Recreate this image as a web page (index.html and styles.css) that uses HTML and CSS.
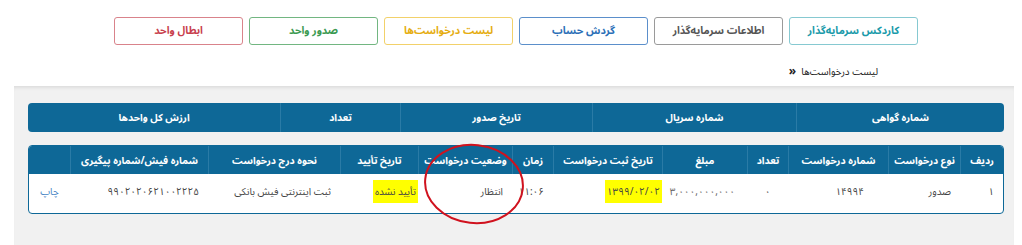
FILE: index.html
```html
<!DOCTYPE html>
<html lang="fa" dir="rtl">
<head>
  <meta charset="UTF-8">
  <title>لیست درخواست‌ها</title>
  <link rel="stylesheet" href="styles.css">
</head>
<body>

<div class="toolbar">
  <button class="btn btn-teal">کاردکس سرمایه‌گذار</button>
  <button class="btn btn-gray">اطلاعات سرمایه‌گذار</button>
  <button class="btn btn-blue">گردش حساب</button>
  <button class="btn btn-yellow">لیست درخواست‌ها</button>
  <button class="btn btn-green">صدور واحد</button>
  <button class="btn btn-red">ابطال واحد</button>
</div>

<div class="breadcrumb">
  <span>لیست درخواست‌ها</span>
  <span class="sep" dir="ltr">»</span>
</div>

<div class="panel">
  <!-- خلاصه گواهی -->
  <div class="summary">
    <div>شماره گواهی</div>
    <div>شماره سریال</div>
    <div>تاریخ صدور</div>
    <div>تعداد</div>
    <div>ارزش کل واحدها</div>
  </div>

  <!-- جدول درخواست‌ها -->
  <div class="requests-wrap">
    <div class="requests">
      <div class="row head">
        <div>ردیف</div>
        <div>نوع درخواست</div>
        <div>شماره درخواست</div>
        <div>تعداد</div>
        <div>مبلغ</div>
        <div>تاریخ ثبت درخواست</div>
        <div>زمان</div>
        <div>وضعیت درخواست</div>
        <div>تاریخ تأیید</div>
        <div>نحوه درج درخواست</div>
        <div>شماره فیش/شماره پیگیری</div>
        <div></div>
      </div>
      <div class="row body">
        <div>۱</div>
        <div>صدور</div>
        <div class="num">۱۴۹۹۴</div>
        <div class="center">۰</div>
        <div class="amount">۳,۰۰۰,۰۰۰,۰۰۰</div>
        <div class="flush"><span class="mark">۱۳۹۹/۰۲/۰۲</span></div>
        <div>۱۱:۰۶</div>
        <div>انتظار</div>
        <div class="flush"><span class="mark">تأیید نشده</span></div>
        <div>ثبت اینترنتی فیش بانکی</div>
        <div>۹۹۰۲۰۲۰۶۲۱۰۰۲۲۲۵</div>
        <div class="center"><a class="print" href="#">چاپ</a></div>
      </div>
    </div>

    <svg class="annot" width="110" height="90" viewBox="0 0 110 90">
      <ellipse cx="55" cy="45" rx="49" ry="39" transform="rotate(6 55 45)" fill="none" stroke="#d0121e" stroke-width="2"/>
    </svg>
  </div>
</div>

</body>
</html>
```

FILE: styles.css
```css
body {
  margin: 0;
  font-family: "Noto Sans Arabic", "DejaVu Sans", sans-serif;
  background-color: #ffffff;
  color: #333333;
  direction: rtl;
}

.toolbar {
  display: flex;
  justify-content: center;
  gap: 6px;
  padding: 17px 0 0 10px;
}

.btn {
  width: 129px;
  height: 28px;
  background-color: #ffffff;
  border: 1px solid;
  border-radius: 3px;
  font-family: inherit;
  font-size: 10.5px;
  font-weight: bold;
  cursor: pointer;
}

.btn-teal { color: #1a9aaa; border-color: #86c9d1; }
.btn-gray { color: #555555; border-color: #9a9a9a; }
.btn-blue { color: #2c6fb7; border-color: #5b8fcb; }
.btn-yellow { color: #e5ad10; border-color: #f2d16a; }
.btn-green { color: #3b9a51; border-color: #72b681; }
.btn-red { color: #c8404d; border-color: #d9838b; }

.breadcrumb {
  display: flex;
  align-items: center;
  gap: 5px;
  height: 29px;
  padding: 12px 144px 0 0;
  font-size: 10px;
  color: #222222;
}

.breadcrumb .sep {
  font-weight: bold;
  font-size: 12px;
}

.panel {
  margin: 0 8px 0 14px;
  padding: 17px 10px 40px 14px;
  background-color: #f1f1f1;
  box-shadow: inset 0 4px 4px -3px rgba(0,0,0,0.12);
  min-height: 110px;
}

.summary {
  display: grid;
  grid-template-columns: 208px 204px 192px 120px 1fr;
  height: 29px;
  background-color: #0e6897;
  border-radius: 4px;
  color: white;
  font-size: 10px;
  font-weight: bold;
}

.summary div {
  display: flex;
  align-items: center;
  justify-content: center;
  border-left: 1px solid #2a7ba6;
}

.summary div:last-child { border-left: none; }

.requests-wrap {
  position: relative;
  margin-top: 13px;
}

.requests {
  border: 1px solid #0e6897;
  border-radius: 4px;
  background-color: #ffffff;
  overflow: hidden;
}

.row {
  display: grid;
  grid-template-columns: 43px 72px 100px 41px 85px 109px 41px 94px 78px 132px 138px 1fr;
}

.head {
  height: 28px;
  background-color: #0e6897;
  color: white;
  font-size: 10px;
  font-weight: bold;
}

.head div {
  display: flex;
  align-items: center;
  justify-content: center;
  border-left: 1px solid #2a7ba6;
}

.head div:last-child { border-left: none; }

.body {
  height: 39px;
  font-size: 10px;
  color: #444444;
}

.body div {
  padding: 7px 9px 0 0;
  text-align: right;
}

.body .num { padding-right: 24px; }
.body .amount { padding-right: 12px; color: #666666; }
.body .flush { padding-right: 0; }
.body .center { padding-right: 0; text-align: center; }

.mark {
  background-color: #ffff00;
  padding: 1px 2px;
}

.print {
  color: #4a86c5;
  text-decoration: none;
}

.annot {
  position: absolute;
  left: 391px;
  top: -6px;
}
```
